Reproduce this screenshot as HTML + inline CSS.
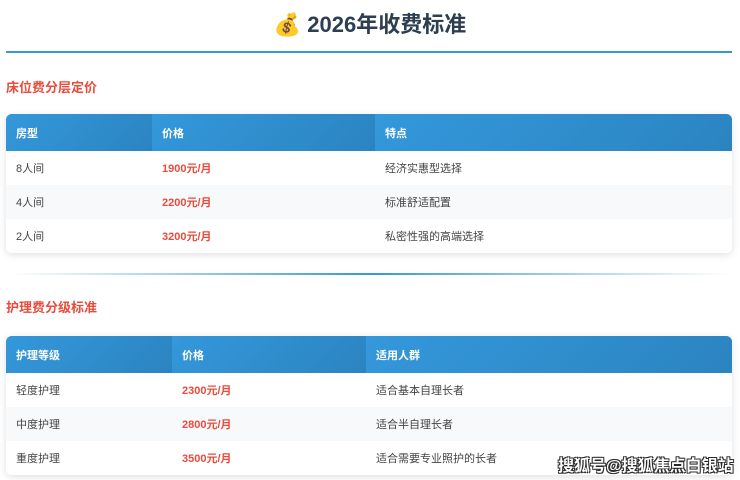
<!DOCTYPE html>
<html><head><meta charset="utf-8"><style>
*{margin:0;padding:0;box-sizing:border-box}
body{width:740px;height:480px;background:#fff;font-family:"Liberation Sans","Noto Sans CJK SC",sans-serif;position:relative;overflow:hidden}
.title{position:absolute;top:9px;left:0;width:740px;text-align:center;font-size:22px;font-weight:bold;color:#2c3e50;line-height:32px}
.line{position:absolute;left:6px;top:51px;width:726px;height:2px;background:#3498db}
.h{position:absolute;left:6px;font-size:13px;font-weight:bold;color:#e74c3c}
.tbl{position:absolute;left:6px;width:726px;border-radius:6px;overflow:hidden;box-shadow:0 2px 8px rgba(0,0,0,.12)}
.row{display:flex;height:34px;align-items:center;font-size:11px;color:#444}
.hd{height:37px;background:linear-gradient(135deg,#3498db,#2980b9);color:#fff;font-weight:bold}
.hd div{height:100%;display:flex;align-items:center;background:linear-gradient(135deg,#3498db,#2b84c0)}
.row div{padding-left:10px}
.p{color:#e74c3c;font-weight:bold}
.div2{position:absolute;left:10px;top:273px;width:720px;height:2px;background:linear-gradient(90deg,rgba(52,152,219,0),#3498db,rgba(52,152,219,0))}
.wm{position:absolute;left:558px;top:452px;font-size:16px;font-weight:bold;color:#fff;text-shadow:0 0 1px #000,1px 1px 0 #333,-1px -1px 0 #333,1px -1px 0 #333,-1px 1px 0 #333}
</style></head><body>
<div class="title">💰 2026年收费标准</div>
<div class="line"></div>
<div class="h" style="top:77px">床位费分层定价</div>
<div class="tbl" style="top:114px">
<div class="row hd"><div style="width:146px">房型</div><div style="width:223px">价格</div><div style="flex:1">特点</div></div>
<div class="row" style="background:#fff"><div style="width:146px">8人间</div><div style="width:223px" class="p">1900元/月</div><div>经济实惠型选择</div></div>
<div class="row" style="background:#f7f9fb"><div style="width:146px">4人间</div><div style="width:223px" class="p">2200元/月</div><div>标准舒适配置</div></div>
<div class="row" style="background:#fff"><div style="width:146px">2人间</div><div style="width:223px" class="p">3200元/月</div><div>私密性强的高端选择</div></div>
</div>
<div class="div2"></div>
<div class="h" style="top:297px">护理费分级标准</div>
<div class="tbl" style="top:336px">
<div class="row hd"><div style="width:166px">护理等级</div><div style="width:194px">价格</div><div style="flex:1">适用人群</div></div>
<div class="row" style="background:#fff"><div style="width:166px">轻度护理</div><div style="width:194px" class="p">2300元/月</div><div>适合基本自理长者</div></div>
<div class="row" style="background:#f7f9fb"><div style="width:166px">中度护理</div><div style="width:194px" class="p">2800元/月</div><div>适合半自理长者</div></div>
<div class="row" style="background:#fff"><div style="width:166px">重度护理</div><div style="width:194px" class="p">3500元/月</div><div>适合需要专业照护的长者</div></div>
</div>
<div class="wm">搜狐号@搜狐焦点白银站</div>
</body></html>
